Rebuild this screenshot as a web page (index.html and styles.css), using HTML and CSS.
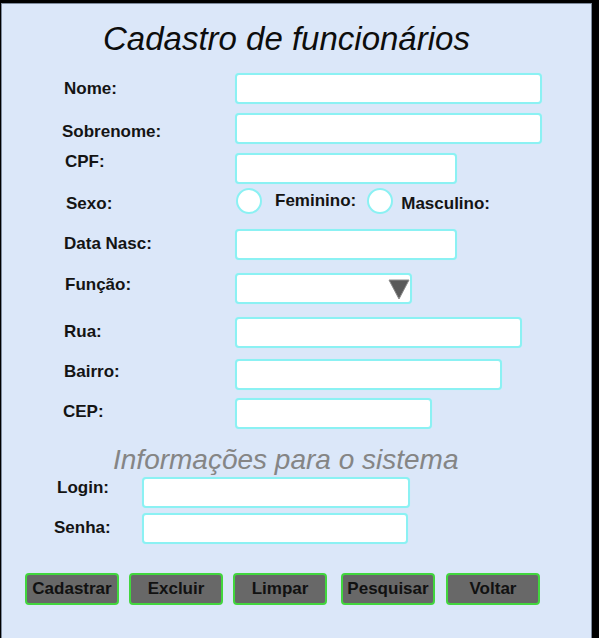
FILE: index.html
```html
<!DOCTYPE html>
<html lang="pt-BR">
<head>
<meta charset="utf-8">
<title>Cadastro de funcionários</title>
<link rel="stylesheet" href="styles.css">
</head>
<body>
<div class="panel">
  <h1 class="title">Cadastro de funcionários</h1>
  <form class="grid main">
    <label class="lbl">Nome:</label>
    <input class="field w307" type="text">
    <label class="lbl down3">Sobrenome:</label>
    <input class="field w307" type="text">
    <label class="lbl up7">CPF:</label>
    <input class="field w222" type="text">
    <label class="lbl down2">Sexo:</label>
    <div class="radios">
      <input class="radio" type="radio" name="sexo">
      <span class="opt fem">Feminino:</span>
      <input class="radio" type="radio" name="sexo">
      <span class="opt masc">Masculino:</span>
    </div>
    <label class="lbl up1">Data Nasc:</label>
    <input class="field w222" type="text">
    <label class="lbl up4">Função:</label>
    <div class="field select w177">
      <svg class="caret" width="22" height="22" viewBox="0 0 22 22"><polygon points="1,2 21,2 11,21" fill="#5a5a5a" stroke="#8a8a8a" stroke-width="1"/></svg>
    </div>
    <label class="lbl up1">Rua:</label>
    <input class="field w287" type="text">
    <label class="lbl up3">Bairro:</label>
    <input class="field w267" type="text">
    <label class="lbl up2">CEP:</label>
    <input class="field w197" type="text">
  </form>
  <h2 class="subtitle">Informações para o sistema</h2>
  <div class="grid login">
    <label class="lbl l-login up5">Login:</label>
    <input class="field w268" type="text">
    <label class="lbl up1">Senha:</label>
    <input class="field w266" type="text">
  </div>
  <div class="buttons">
    <button class="btn" type="button">Cadastrar</button>
    <button class="btn" type="button">Excluir</button>
    <button class="btn" type="button">Limpar</button>
    <button class="btn gap4" type="button">Pesquisar</button>
    <button class="btn gap1" type="button">Voltar</button>
  </div>
</div>
</body>
</html>
```
FILE: styles.css
```css
* { box-sizing: border-box; }
html, body { margin: 0; padding: 0; }
body {
  background: #000;
  font-family: "Liberation Sans", Arial, sans-serif;
  width: 599px;
  height: 638px;
  overflow: hidden;
}
.panel {
  margin: 3px 0 0 1px;
  width: 591px;
  height: 640px;
  background: #dbe7f9;
  border: 1px solid #7d8a9c;
}
.title {
  margin: 16px 0 0 0;
  padding-left: 101px;
  font-size: 33px;
  line-height: 38px;
  font-style: italic;
  font-weight: normal;
  color: #0d0d0d;
}
.grid {
  display: grid;
  align-items: start;
}
.main {
  margin: 15px 0 0 0;
  padding-left: 62px;
  grid-template-columns: 171px auto;
  grid-template-rows: 40px 40px 33px 43px 44px 44px 42px 39px 31px;
}
.lbl {
  font-size: 17px;
  font-weight: bold;
  color: #141414;
  line-height: 31px;
  white-space: nowrap;
}
.down3 { margin-top: 3px; margin-left: -2px; }
.down2 { margin-top: 2px; margin-left: 2px; }
.up7 { margin-top: -7px; margin-left: 1px; }
.up1 { margin-top: -1px; }
.up2 { margin-top: -2px; margin-left: -1px; }
.up3 { margin-top: -3px; }
.up4 { margin-top: -4px; margin-left: 1px; }
.field {
  display: block;
  height: 31px;
  margin: 0;
  padding: 0 6px;
  background: #fff;
  border: 2px solid #8bf1f3;
  border-radius: 4px;
  box-shadow: 0 0 1px #b4f6f8;
  outline: none;
  font: 16px "Liberation Sans", Arial, sans-serif;
}
.w307 { width: 307px; }
.w287 { width: 287px; }
.w268 { width: 268px; }
.w267 { width: 267px; }
.w266 { width: 266px; }
.w222 { width: 222px; }
.w197 { width: 197px; }
.w177 { width: 177px; }
.select {
  display: flex;
  justify-content: flex-end;
  align-items: center;
  padding: 0;
}
.caret { display: block; margin-top: 1px; }
.radios {
  display: flex;
  align-items: flex-start;
  height: 31px;
}
.radio {
  appearance: none;
  -webkit-appearance: none;
  margin: 2px 0 0 1px;
  width: 26px;
  height: 26px;
  border-radius: 50%;
  background: #fff;
  border: 2px solid #8bf1f3;
}
.opt {
  font-size: 17px;
  font-weight: bold;
  color: #141414;
  line-height: 20px;
  white-space: nowrap;
}
.fem { margin: 5px 10px 0 13px; }
.masc { margin: 8px 0 0 8px; }
.subtitle {
  margin: 15px 0 0 0;
  padding-left: 111px;
  font-size: 28px;
  line-height: 32px;
  font-style: italic;
  font-weight: normal;
  color: #858585;
}
.login {
  margin-top: 1px;
  padding-left: 52px;
  grid-template-columns: 88px auto;
  grid-template-rows: 36px 31px;
}
.l-login { margin-left: 3px; }
.up5 { margin-top: -5px; }
.buttons {
  display: flex;
  margin-top: 29px;
  padding-left: 23px;
  gap: 10px;
}
.btn {
  width: 94px;
  height: 32px;
  padding: 0;
  background: #686868;
  border: 2px solid #42d63e;
  border-radius: 4px;
  font: bold 17px "Liberation Sans", Arial, sans-serif;
  color: #111;
}
.gap4 { margin-left: 4px; }
.gap1 { margin-left: 1px; }
```
